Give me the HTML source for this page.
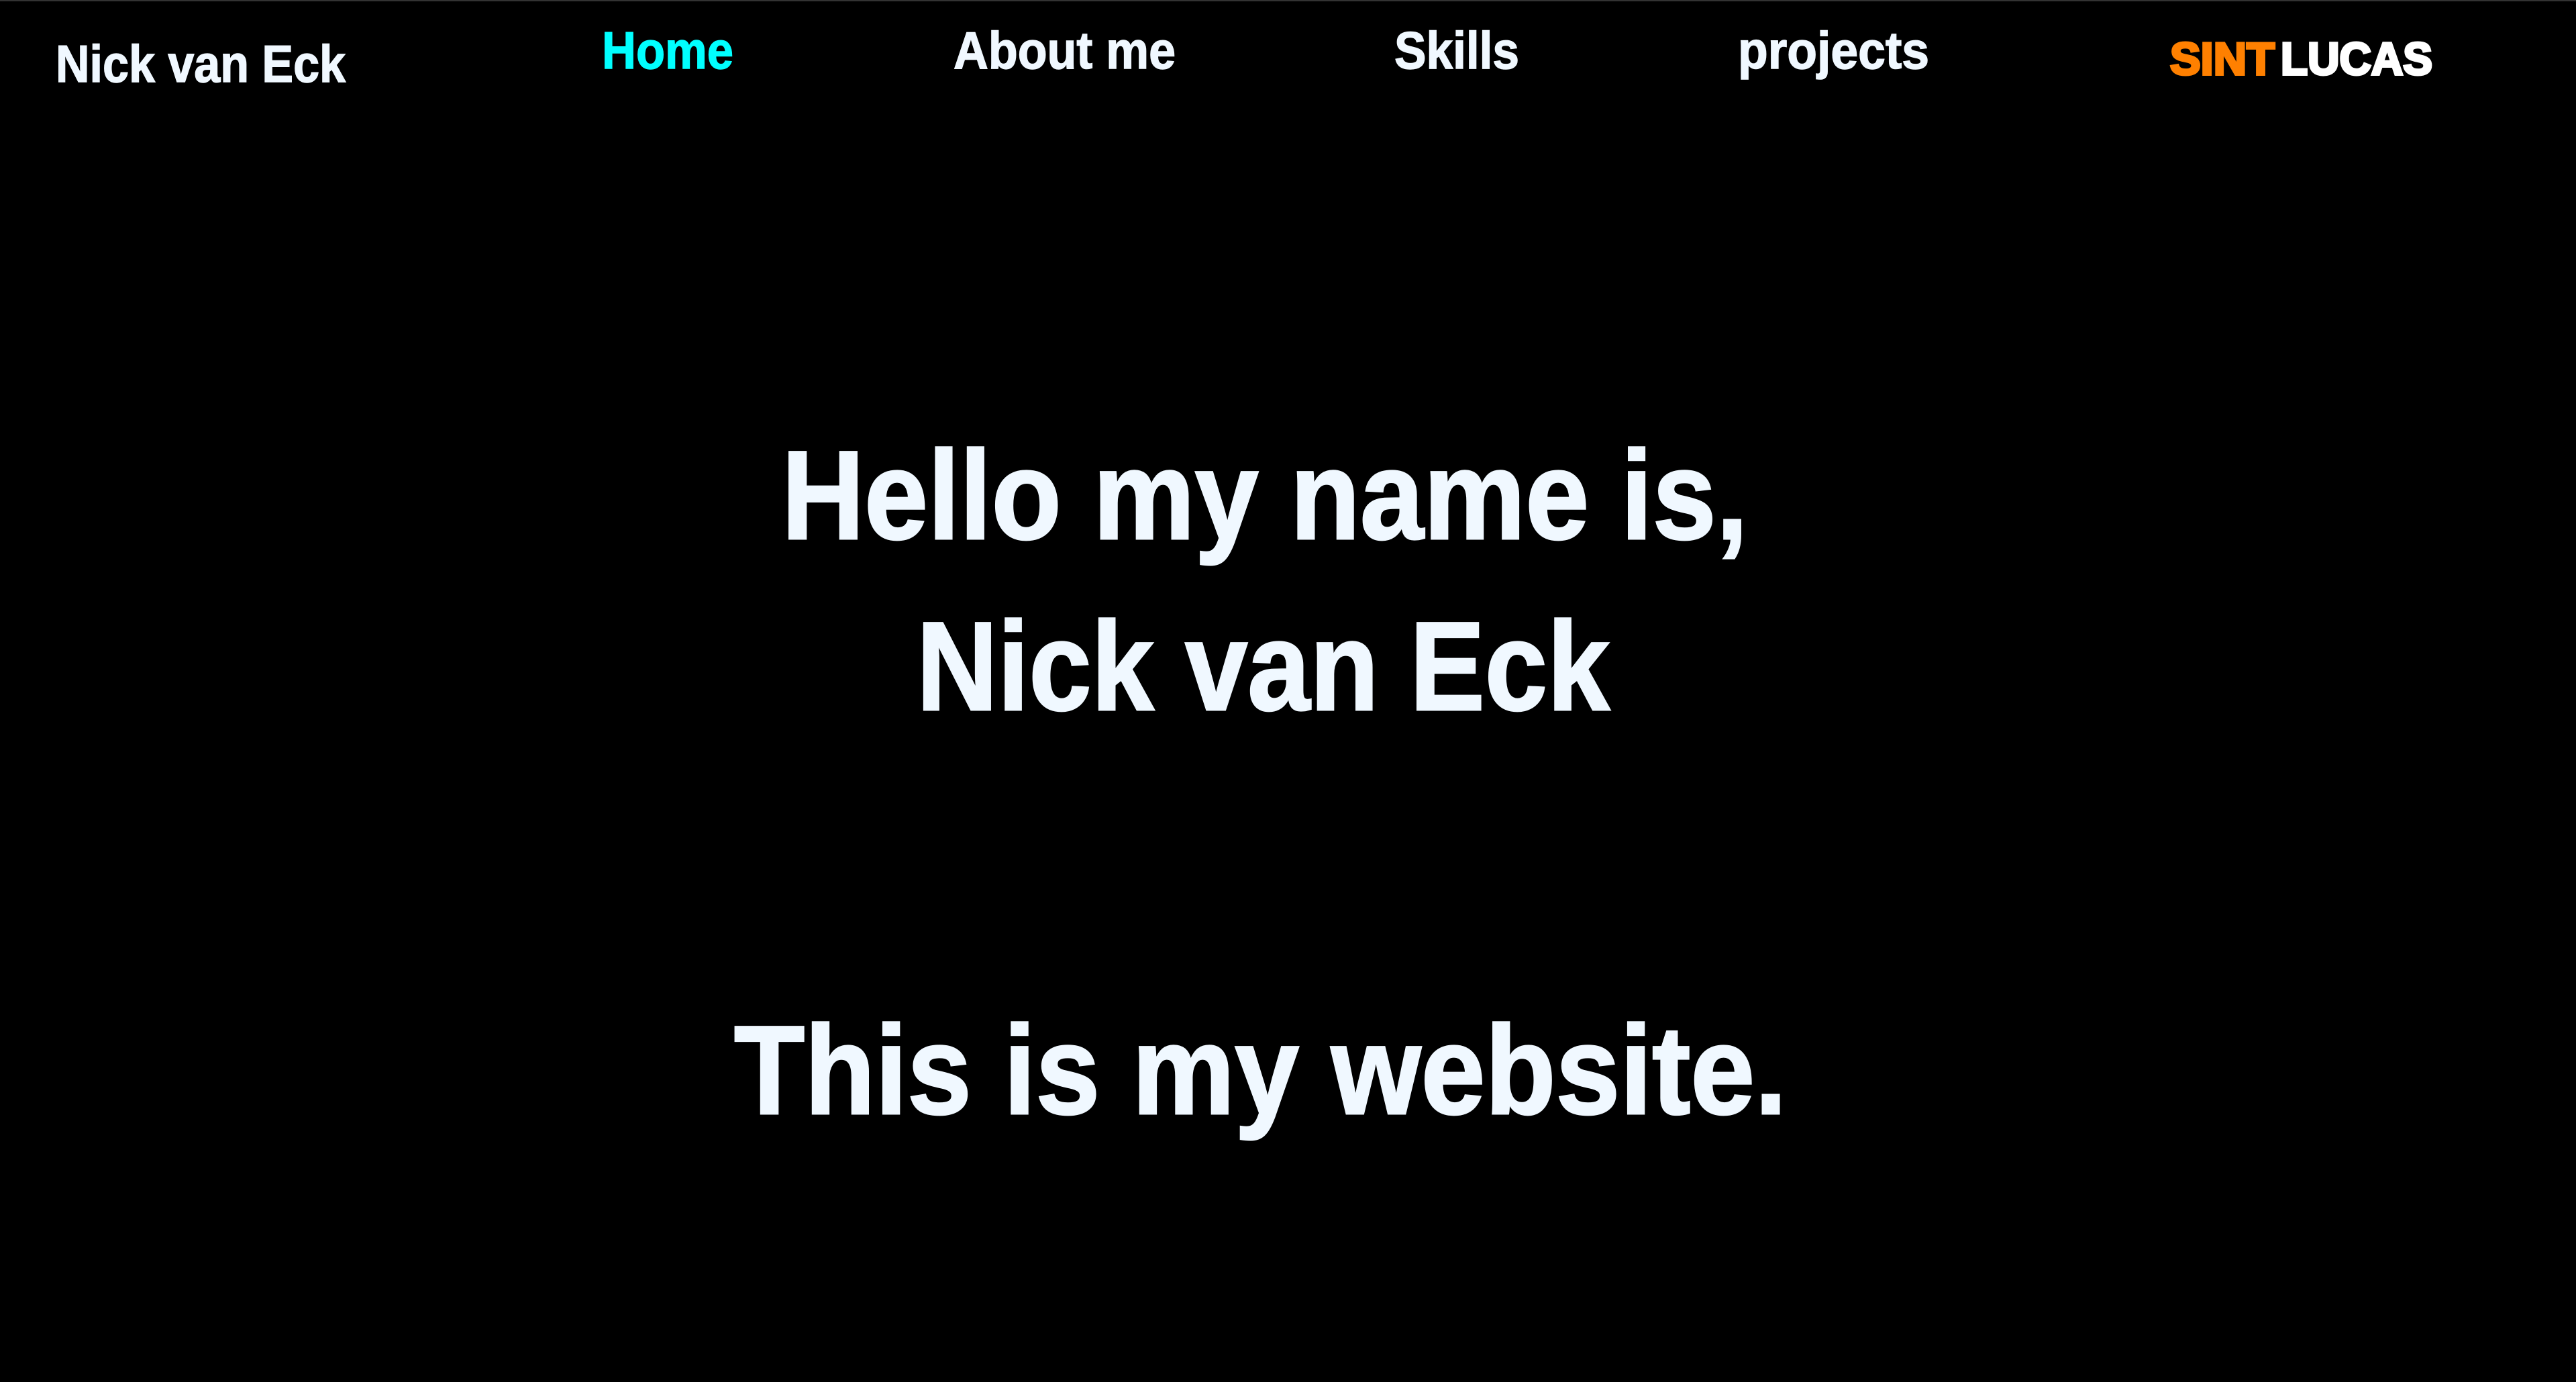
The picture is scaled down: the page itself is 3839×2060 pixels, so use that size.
<!DOCTYPE html>
<html><head><meta charset="utf-8"><style>
html,body{margin:0;padding:0;background:#000;width:3839px;height:2060px;overflow:hidden}
svg{display:block}
text{font-family:"Liberation Sans",sans-serif;font-weight:bold}
</style></head><body>
<svg width="3839" height="2060" viewBox="0 0 3839 2060" xmlns="http://www.w3.org/2000/svg">
<rect x="0" y="0" width="3839" height="2060" fill="#000"/>
<rect x="0" y="0" width="3839" height="2" fill="#333"/>
<g font-size="78" fill="#f0f8ff" stroke="#f0f8ff" stroke-width="1.5">
<text x="83" y="122" textLength="432" lengthAdjust="spacingAndGlyphs">Nick van Eck</text>
<text x="897" y="102" textLength="196" lengthAdjust="spacingAndGlyphs" fill="#00ffff" stroke="#00ffff">Home</text>
<text x="1421" y="102" textLength="331" lengthAdjust="spacingAndGlyphs">About me</text>
<text x="2078" y="102" textLength="186" lengthAdjust="spacingAndGlyphs">Skills</text>
<text x="2590" y="102" textLength="285" lengthAdjust="spacingAndGlyphs">projects</text>
</g>
<g font-size="68" stroke-width="4">
<text x="3234" y="111" textLength="156" lengthAdjust="spacingAndGlyphs" fill="#ff8000" stroke="#ff8000">SINT</text>
<text x="3399" y="111" textLength="226" lengthAdjust="spacingAndGlyphs" fill="#ffffff" stroke="#ffffff">LUCAS</text>
</g>
<g font-size="188" fill="#f0f8ff" stroke="#f0f8ff" stroke-width="3">
<text x="1165" y="803" textLength="1440" lengthAdjust="spacingAndGlyphs">Hello my name is,</text>
<text x="1366" y="1058" textLength="1033" lengthAdjust="spacingAndGlyphs">Nick van Eck</text>
<text x="1094" y="1660" textLength="1569" lengthAdjust="spacingAndGlyphs">This is my website.</text>
</g>
</svg>
</body></html>
